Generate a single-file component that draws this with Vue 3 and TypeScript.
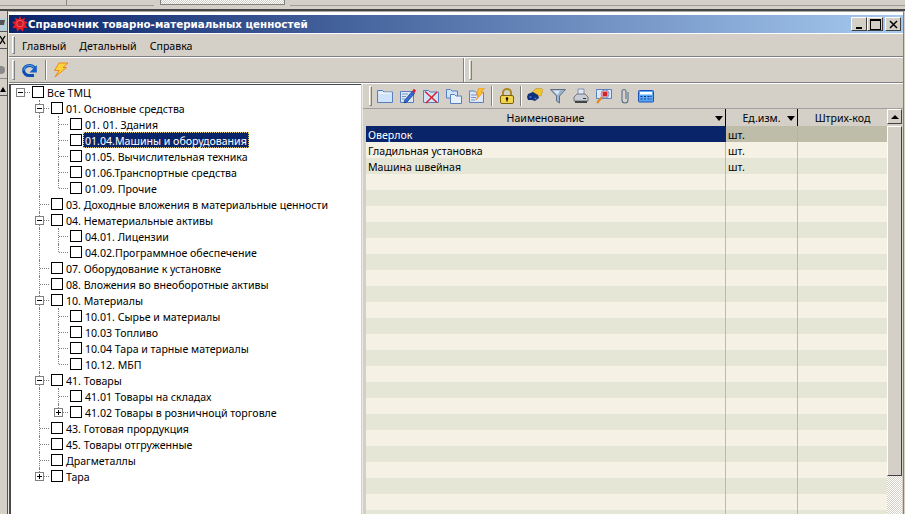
<script setup lang="ts">
interface TreeRow {
  lv: number
  text: string
  exp?: '-' | '+'
  last?: boolean
  sel?: boolean
}

const tree: TreeRow[] = [
  { lv: 0, text: 'Все ТМЦ', exp: '-' },
  { lv: 1, text: '01. Основные средства', exp: '-' },
  { lv: 2, text: '01. 01. Здания' },
  { lv: 2, text: '01.04.Машины и оборудования', sel: true },
  { lv: 2, text: '01.05. Вычислительная техника' },
  { lv: 2, text: '01.06.Транспортные средства' },
  { lv: 2, text: '01.09. Прочие', last: true },
  { lv: 1, text: '03. Доходные вложения в материальные ценности' },
  { lv: 1, text: '04. Нематериальные активы', exp: '-' },
  { lv: 2, text: '04.01. Лицензии' },
  { lv: 2, text: '04.02.Программное обеспечение', last: true },
  { lv: 1, text: '07. Оборудование к установке' },
  { lv: 1, text: '08. Вложения во внеоборотные активы' },
  { lv: 1, text: '10. Материалы', exp: '-' },
  { lv: 2, text: '10.01. Сырье и материалы' },
  { lv: 2, text: '10.03 Топливо' },
  { lv: 2, text: '10.04 Тара и тарные материалы' },
  { lv: 2, text: '10.12. МБП', last: true },
  { lv: 1, text: '41. Товары', exp: '-' },
  { lv: 2, text: '41.01 Товары на складах' },
  { lv: 2, text: '41.02 Товары в розничноцй торговле', exp: '+', last: true },
  { lv: 1, text: '43. Готовая прордукция' },
  { lv: 1, text: '45. Товары отгруженные' },
  { lv: 1, text: 'Драгметаллы' },
  { lv: 1, text: 'Тара', exp: '+', last: true },
]

const names = ['Оверлок', 'Гладильная установка', 'Машина швейная']
const rows = Array.from({ length: 25 }, (_, i) => ({
  name: names[i] ?? '',
  unit: names[i] ? 'шт.' : '',
  cls: i === 0 ? 'sel' : i % 2 === 0 ? 'alt' : 'base',
}))
</script>

<template>
  <div class="page">
    <div class="top">
      <div class="top-gap"></div>
      <div class="top-box"></div>
      <div class="top-rest"></div>
    </div>
    <div class="body">
      <div class="strip">
        <svg width="7" height="103" viewBox="0 0 7 103">
          <rect x="0" y="7" width="7" height="13" fill="#bcd0dc" />
          <path d="M0 9h5l-1 5H0z" fill="#555" />
          <path d="M0 20.500h7M0 37.500h7" stroke="#555" />
          <path d="M0 25l5 8M5 25l-5 8" stroke="#000" stroke-width="1.400" fill="none" />
          <circle cx="1" cy="59" r="4" fill="#8a8a8a" />
          <path d="M0 67.500h7" stroke="#888" />
          <path d="M0 81h6l-3-5z" fill="#000" />
          <path d="M0 84.500h7" stroke="#555" />
        </svg>
      </div>
      <div class="window">
        <div class="title">
          <svg class="logo" width="16" height="16" viewBox="0 0 16 16">
            <path d="M8 0l1.600 3.400L13 1.500l-.9 3.700L16 6l-2.800 2.400L15.500 12l-3.900-.3L11 15.500 8 13l-3 2.500-.6-3.800-3.900.3 2.300-3.600L0 6l3.900-.8L3 1.500l3.400 1.900z" fill="#ee1c25" />
            <circle cx="8" cy="7.500" r="3.200" fill="#c0182a" stroke="#f77" stroke-width=".7" />
          </svg>
          <span class="title-text">Справочник товарно-материальных ценностей</span>
          <div class="ctrls">
            <button class="ctrl"><i class="c-min"></i></button>
            <button class="ctrl"><i class="c-max"></i></button>
            <button class="ctrl close">
              <svg width="9" height="9" viewBox="0 0 9 9"><path d="M1 1l7 7M8 1L1 8" stroke="#000" stroke-width="1.500" /></svg>
            </button>
          </div>
        </div>

        <div class="menubar">
          <i class="grip"></i>
          <span class="mi">Главный</span>
          <span class="mi">Детальный</span>
          <span class="mi">Справка</span>
        </div>

        <div class="toolbar">
          <div class="band first">
            <i class="grip"></i>
            <svg class="refresh" width="17" height="16" viewBox="0 0 17 16">
              <path d="M2.500 8.500a6 5.500 0 0 1 11-2.500M13 13.500H8.500a5.500 5.500 0 0 1-6-5" fill="none" stroke="#0d4fb0" stroke-width="3" />
              <path d="M3 8a5.500 5 0 0 1 10-2.500" fill="none" stroke="#4a9af0" stroke-width="1.200" />
              <path d="M15.800 3v7.500H8.500z" fill="#1560c8" />
            </svg>
            <i class="sep"></i>
            <svg class="bolt" width="16" height="16" viewBox="0 0 16 16">
              <path d="M6 1h9l-5 4.500h3.500L2 15l4-6.500H1.500z" fill="#fcd23a" stroke="#e8801a" stroke-width=".9" />
            </svg>
          </div>
          <div class="band second"><i class="grip"></i></div>
        </div>

        <div class="main">
          <div class="tree">
            <div v-for="r in tree" :key="r.text" class="tr">
              <i v-if="r.lv > 0" class="cell"></i>
              <i v-if="r.lv > 1" class="cell"><b class="v"></b></i>
              <i class="cell">
                <b v-if="r.lv > 0" class="v" :class="{ half: r.last }"></b>
                <b class="h"></b>
                <b v-if="r.exp" class="exp">
                  <u class="minus"></u>
                  <u v-if="r.exp === '+'" class="plus"></u>
                </b>
              </i>
              <i class="chk"></i>
              <span class="label" :class="{ on: r.sel }">{{ r.text }}</span>
            </div>
          </div>

          <div class="right">
            <div class="listbar">
              <i class="grip"></i>
              <div class="ic">
                <svg width="16" height="16" viewBox="0 0 16 16"><path d="M.5 4V2.500h5L7 4h8.500v10.500H.5z" fill="#cfe4fb" stroke="#5a7fc0" /><path d="M1.500 5h13" stroke="#fff" /></svg>
              </div>
              <div class="ic">
                <svg width="16" height="16" viewBox="0 0 16 16"><path d="M.5 3.500h13v11H.5z" fill="#dce8fa" stroke="#5a7fc0" /><path d="M2 6h6M2 8.500h4M2 11h3" stroke="#7a93c0" /><path d="M4.500 12.500L12 3.500l2.500 2-7.500 8.500-3 .8z" fill="#2f6fd6" stroke="#142f70" stroke-width=".7" /><path d="M12.300 3l1.500-2.200L16 2.500l-1.300 2.400z" fill="#d8202a" /></svg>
              </div>
              <div class="ic">
                <svg width="16" height="16" viewBox="0 0 16 16"><path d="M.5 4V2.500h5L7 4h8.500v10.500H.5z" fill="#cfe4fb" stroke="#5a7fc0" /><path d="M2 3.500l12 11M14 4L3 15" stroke="#d8202a" stroke-width="1.500" /></svg>
              </div>
              <div class="ic">
                <svg width="16" height="16" viewBox="0 0 16 16"><path d="M.5 3V1.500h4L6 3h5.500v7H.5z" fill="#cfe4fb" stroke="#5a7fc0" /><path d="M4.500 8V6.500h4L10 8h5.500v7.500h-11z" fill="#e6f1fd" stroke="#5a7fc0" /></svg>
              </div>
              <div class="ic">
                <svg width="16" height="16" viewBox="0 0 16 16"><path d="M.5 4.500V3h5L7 4.500h7.500v10H.5z" fill="#dce8fa" stroke="#5a7fc0" /><path d="M2 7h7M2 9.500h5M2 12h4" stroke="#7a93c0" /><path d="M10 0h5.500L12 4h2.500L7 12l2.500-5.500H7z" fill="#fbc02d" stroke="#e8801a" stroke-width=".6" /></svg>
              </div>
              <i class="sep s1"></i>
              <div class="ic i-lock">
                <svg width="16" height="16" viewBox="0 0 16 16"><path d="M4 8V4.500a4 3.500 0 0 1 8 0V8" fill="none" stroke="#a88a20" stroke-width="2" /><rect x="1.500" y="7.500" width="13" height="8" rx="1.500" fill="#f4d54a" stroke="#7a6210" /><circle cx="8" cy="10.500" r="1.200" fill="#000" /><path d="M8 11v2.500" stroke="#000" stroke-width="1.200" /></svg>
              </div>
              <i class="sep s2"></i>
              <div class="ic">
                <svg width="16" height="16" viewBox="0 0 16 16"><path d="M5 4l4-3.500h5.500L16 2l-2 6H7z" fill="#f2c335" stroke="#a88a20" stroke-width=".5" /><path d="M1 6l5-2 5 3 1 3-4 3-3-1-4 0-1-3z" fill="#10307a" /><circle cx="3.500" cy="9" r="1.100" fill="#4a7ad0" /><circle cx="8.500" cy="10.500" r="1.100" fill="#4a7ad0" /></svg>
              </div>
              <div class="ic">
                <svg width="16" height="16" viewBox="0 0 16 16"><path d="M.5 1.500h15L9.500 8v7L6.500 13V8z" fill="#9fb3cf" stroke="#5a6c88" /><path d="M3 2.500h7L7.500 7z" fill="#dbe6f3" /></svg>
              </div>
              <div class="ic">
                <svg width="16" height="16" viewBox="0 0 16 16"><path d="M5 1h6v6H5z" fill="#dfe8f4" stroke="#8094b0" /><path d="M1 9l3-3h8l3 3v4H1z" fill="#c8ccd4" stroke="#70747c" /><path d="M2 13h12v2H2z" fill="#444" /><path d="M10 10.500h3" stroke="#333" /></svg>
              </div>
              <div class="ic">
                <svg width="16" height="16" viewBox="0 0 16 16"><path d="M.5 3.500V1.500h15v9H.5z" fill="#dce8fa" stroke="#5a7fc0" /><circle cx="9" cy="6" r="4" fill="#fff" stroke="#7a93c0" /><rect x="6.500" y="3.500" width="5" height="5" fill="#d8202a" /><path d="M6 9L1 15" stroke="#e08a20" stroke-width="2.200" /></svg>
              </div>
              <div class="ic clip">
                <svg width="12" height="16" viewBox="0 0 12 16"><path d="M9 4v8a3 3 0 0 1-6 0V3.500a2 2 0 0 1 4 0V11" fill="none" stroke="#5a7090" stroke-width="1.100" /></svg>
              </div>
              <div class="ic">
                <svg width="16" height="16" viewBox="0 0 16 16"><rect x=".5" y="2.500" width="15" height="11.500" rx="1" fill="#5aa8f4" stroke="#1c50b4" /><rect x="2" y="4" width="12" height="2.500" fill="#fff" /><path d="M2.500 8.500h2M6 8.500h2M9.500 8.500h2M2.500 11h2M6 11h2M9.500 11h2M12.500 8.500h1M12.500 11h1" stroke="#10308a" /></svg>
              </div>
            </div>

            <div class="grid">
              <div class="cols">
                <div class="colhead">
                  <div class="hc c1">Наименование<i class="arrow"></i></div>
                  <div class="hc c2">Ед.изм.<i class="arrow"></i></div>
                  <div class="hc c3">Штрих-код</div>
                </div>
                <div v-for="(r, i) in rows" :key="i" class="row" :class="r.cls">
                  <div class="dc c1">{{ r.name }}</div>
                  <div class="dc c2">{{ r.unit }}</div>
                  <div class="dc c3"></div>
                </div>
              </div>
              <div class="sb">
                <button class="sb-btn"><i class="up"></i></button>
                <div class="thumb"></div>
                <div class="track"></div>
              </div>
            </div>
          </div>
        </div>
      </div>
    </div>
  </div>
</template>

<style>
html, body { margin: 0; background: #f4f4f4; }
</style>

<style scoped>
.page {
  width: 905px;
  height: 514px;
  overflow: hidden;
  display: flex;
  flex-direction: column;
  font: 10.6px "Noto Sans", Verdana, sans-serif;
  color: #000;
  background: #d4d0c8;
}
i, b, u { display: block; font-style: normal; text-decoration: none; }
button { padding: 0; font: inherit; }

.top {
  height: 9px;
  flex: none;
  display: flex;
  border-bottom: 2px solid #454545;
}
.top-gap {
  width: 154px;
  flex: none;
  height: 5px;
  border-bottom: 1px solid #9a9a9a;
  background: linear-gradient(90deg, #d4d0c8 66px, #888 66px, #888 67px, #d4d0c8 67px);
}
.top-box {
  width: 123px;
  height: 4px;
  margin: 0 5px 0 6px;
  flex: none;
  border: 1px solid #808080;
  border-top: 0;
  background: repeating-conic-gradient(#fff 0 25%, #d4d0c8 0 50%) 0 0 / 2px 2px;
  box-shadow: -5px 0 0 -4px #808080, 5px 0 0 -4px #808080;
}
.top-rest {
  width: 615px;
  height: 5px;
  flex: none;
  border-bottom: 1px solid #9a9a9a;
  border-right: 1px solid #808080;
}

.body { flex: 1; display: flex; min-height: 0; }
.strip {
  width: 7px;
  flex: none;
  border-right: 1px solid #555;
}
.strip svg { display: block; }
.window {
  width: 894px;
  flex: none;
  padding-top: 4px;
  border-left: 1px solid #ece9e2;
  border-right: 1px solid #808080;
  border-top: 1px solid #a8a8a8;
  background:
    linear-gradient(#fff, #fff) 0 0 / 100% 3px no-repeat,
    #d4d0c8;
  display: flex;
  flex-direction: column;
  min-height: 0;
}
.title {
  height: 18px;
  flex: none;
  display: flex;
  align-items: center;
  padding: 0 2px 0 3px;
  background: linear-gradient(90deg, #0a246a, #a6caf0);
  border-bottom: 1px solid #fff;
  margin-top: -1px;
  box-sizing: content-box;
}
.logo { flex: none; }
.title-text {
  color: #fff;
  font: 700 10.3px "DejaVu Sans", Verdana, sans-serif;
  white-space: nowrap;
}
.ctrls { margin-left: auto; display: flex; }
.ctrl {
  width: 16px;
  height: 14px;
  border: 1px solid;
  border-color: #fff #404040 #404040 #fff;
  background: #d4d0c8;
  display: flex;
  align-items: center;
  justify-content: center;
  position: relative;
}
.ctrl.close { margin-left: 2px; }
.c-min { width: 6px; height: 2px; background: #000; margin-top: 7px; margin-right: 1px; }
.c-max { width: 9px; height: 8px; border: 1px solid #000; border-top-width: 2px; box-sizing: content-box; }

.grip {
  width: 1px;
  border: 1px solid;
  border-color: #fff #808080 #808080 #fff;
  box-sizing: content-box;
}

.menubar {
  height: 22px;
  flex: none;
  display: flex;
  align-items: stretch;
  padding-left: 3px;
  border-bottom: 1px solid #808080;
  box-shadow: 0 1px 0 #fff;
  box-sizing: content-box;
}
.menubar .grip { height: 16px; margin: 2px 0 0 0; }
.mi {
  display: flex;
  align-items: center;
  margin-left: 7px;
  margin-right: 6px;
  padding-top: 2px;
  white-space: nowrap;
}

.toolbar {
  height: 24px;
  flex: none;
  margin-top: 1px;
  display: flex;
  border-bottom: 1px solid #808080;
  box-shadow: 0 1px 0 #fff;
  box-sizing: content-box;
}
.band { display: flex; align-items: center; height: 24px; }
.band.first {
  width: 455px;
  flex: none;
  padding-left: 3px;
  box-sizing: border-box;
  border-right: 1px solid #808080;
}
.band.second {
  padding-left: 4px;
  border-left: 1px solid #fff;
}
.band .grip { height: 18px; }
.refresh { margin-left: 6px; }
.sep {
  width: 1px;
  height: 20px;
  background: #808080;
  box-shadow: 1px 0 0 #fff;
}
.band .sep { margin-left: 7px; }
.bolt { margin-left: 7px; }

.main { flex: 1; min-height: 0; display: flex; margin-top: 1px; }

.tree {
  width: 352px;
  flex: none;
  padding-left: 2px;
  box-sizing: border-box;
  background: #fff;
  box-shadow: inset 2px 1px 0 #4a4a4a;
}
.tr {
  height: 16px;
  display: flex;
  align-items: center;
  white-space: nowrap;
}
.cell {
  width: 19px;
  height: 16px;
  flex: none;
  position: relative;
}
.v {
  position: absolute;
  left: 9px;
  top: 0;
  bottom: 0;
  border-left: 1px dotted #808080;
}
.v.half { bottom: 8px; }
.h {
  position: absolute;
  left: 10px;
  right: 0;
  top: 8px;
  border-top: 1px dotted #808080;
}
.exp {
  position: absolute;
  left: 5px;
  top: 4px;
  width: 9px;
  height: 9px;
  box-sizing: border-box;
  border: 1px solid #808080;
  background: #fff;
}
.minus {
  position: absolute;
  left: 1px;
  top: 3px;
  width: 5px;
  height: 1px;
  background: #000;
}
.plus {
  position: absolute;
  left: 3px;
  top: 1px;
  width: 1px;
  height: 5px;
  background: #000;
}
.chk {
  width: 12px;
  height: 12px;
  flex: none;
  box-sizing: border-box;
  margin-left: 2px;
  border: 1px solid #000;
  background: #fff;
}
.label {
  margin-left: 2px;
  padding: 2px 1px 0;
  height: 16px;
  line-height: 14px;
  box-sizing: border-box;
}
.label.on {
  margin-left: 1px;
  padding: 2px 2px 0;
  background: #0a246a;
  color: #fff;
  outline: 1px dotted #e8d060;
  outline-offset: -1px;
}

.right {
  flex: 1;
  min-width: 0;
  margin-left: 1px;
  display: flex;
  flex-direction: column;
  border-left: 1px solid #ece9e2;
}
.listbar {
  height: 24px;
  flex: none;
  display: flex;
  align-items: center;
  padding-left: 6px;
  border-bottom: 1px solid #a0a0a0;
}
.listbar .grip { height: 18px; }
.ic { width: 16px; height: 16px; margin-left: 7px; flex: none; }
.ic svg { display: block; }
.listbar .grip + .ic { margin-left: 5px; }
.ic.clip { width: 12px; margin-left: 7px; }
.s1 { margin-left: 6px; }
.s2 { margin-left: 5px; }
.s1 + .i-lock { margin-left: 7px; }
.s2 + .ic { margin-left: 6px; }

.grid {
  flex: 1;
  min-height: 0;
  display: flex;
  padding-left: 3px;
}
.cols { width: 521px; flex: none; }
.colhead { display: flex; height: 17px; }
.hc {
  position: relative;
  display: flex;
  align-items: center;
  justify-content: center;
  box-sizing: border-box;
  height: 17px;
  border-right: 1px solid #000;
}
.hc.c3 { border-right: 0; }
.c1 { width: 360px; flex: none; }
.c2 { width: 72px; flex: none; }
.c3 { flex: 1; min-width: 0; }
.arrow {
  position: absolute;
  right: 2px;
  top: 7px;
  border: 4px solid transparent;
  border-top: 5px solid #000;
  border-bottom: 0;
}
.row { display: flex; height: 16px; line-height: 19px; }
.dc {
  box-sizing: border-box;
  padding-left: 2px;
  height: 16px;
  border-right: 1px solid #b8b8b8;
  white-space: nowrap;
  overflow: hidden;
}
.dc.c3 { border-right: 0; }
.base { background: #f5f1e5; }
.alt { background: #e5e6d5; }
.sel { background: #bdbdaa; }
.sel .c1 { background: #0a246a; color: #fff; border-right: 0; }
.sel .c2 { border-right-color: #b4b4a4; }

.sb {
  width: 15px;
  flex: none;
  display: flex;
  flex-direction: column;
}
.sb-btn {
  width: 15px;
  height: 15px;
  margin-bottom: 2px;
  flex: none;
  border: 1px solid;
  border-color: #fff #404040 #404040 #fff;
  background: #d4d0c8;
  display: flex;
  align-items: center;
  justify-content: center;
}
.up {
  border: 4px solid transparent;
  border-bottom: 4px solid #000;
  border-top: 0;
}
.thumb {
  height: 350px;
  flex: none;
  box-sizing: border-box;
  border: 1px solid;
  border-color: #fff #404040 #404040 #fff;
  background: #d4d0c8;
}
.track {
  flex: 1;
  background: repeating-conic-gradient(#fff 0 25%, #d4d0c8 0 50%) 0 0 / 2px 2px;
}
</style>
